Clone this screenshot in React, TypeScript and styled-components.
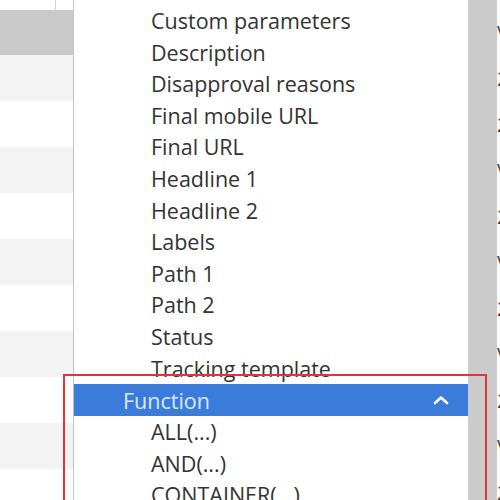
import React from "react";
import styled, { createGlobalStyle } from "styled-components";

const GlobalStyle = createGlobalStyle`
  html, body {
    margin: 0;
    padding: 0;
    background: #ffffff;
    overflow: hidden;
  }
  body {
    font-family: "Open Sans", "Noto Sans", sans-serif;
  }
`;

const fields = [
  "Custom parameters",
  "Description",
  "Disapproval reasons",
  "Final mobile URL",
  "Final URL",
  "Headline 1",
  "Headline 2",
  "Labels",
  "Path 1",
  "Path 2",
  "Status",
  "Tracking template",
];

const functions = ["ALL(...)", "AND(...)", "CONTAINER(...)"];

const ScPage = styled.div`
  position: relative;
  width: 500px;
  height: 500px;
  display: flex;
  overflow: hidden;
  background: #ffffff;
`;

const ScGrid = styled.div`
  width: 73px;
  flex: none;
  border-right: 1px solid #c4c4c4;
  display: flex;
  flex-direction: column;
`;

const ScGridTop = styled.div`
  height: 10px;
  flex: none;
  width: 55px;
  border-right: 1px solid #d0d0d0;
`;

const ScGridHeader = styled.div`
  height: 45px;
  flex: none;
  background: #c9c9c9;
`;

const ScGridRow = styled.div<{ $alt: boolean }>`
  height: 46px;
  flex: none;
  background: ${(p) => (p.$alt ? "#f3f3f3" : "#ffffff")};
`;

const ScMenu = styled.div`
  width: 394px;
  flex: none;
  display: flex;
  flex-direction: column;
  padding-top: 5px;
  color: #333333;
  font-size: 21.5px;
`;

const ScItem = styled.div`
  height: 31.6px;
  flex: none;
  line-height: 31.6px;
  padding-left: 77px;
  white-space: nowrap;
`;

const ScGroupHeader = styled.div`
  height: 32px;
  flex: none;
  background: #3b7cdb;
  color: #dde9fb;
  display: flex;
  align-items: center;
  justify-content: space-between;
  padding: 0 18px 0 49px;
`;

const ScStrip = styled.div`
  width: 29px;
  flex: none;
  background: #cbcbcb;
`;

const ScRightGrid = styled.div`
  flex: 1;
  display: flex;
  flex-direction: column;
  padding-top: 10px;
  font-size: 20px;
  color: #444444;
  white-space: nowrap;
`;

const ScRightCell = styled.div`
  height: 46px;
  flex: none;
  line-height: 46px;
`;

const ScHighlight = styled.div`
  position: absolute;
  left: 63px;
  top: 374px;
  width: 420px;
  height: 140px;
  border: 2px solid #e03535;
  pointer-events: none;
`;

const Chevron = () => (
  <svg width="18" height="12" viewBox="0 0 18 12">
    <path
      d="M3 9 L9 3.5 L15 9"
      fill="none"
      stroke="#ffffff"
      strokeWidth="2.6"
      strokeLinecap="round"
      strokeLinejoin="round"
    />
  </svg>
);

export default function App() {
  return (
    <ScPage>
      <GlobalStyle />
      <ScGrid>
        <ScGridTop />
        <ScGridHeader />
        {Array.from({ length: 10 }).map((_, i) => (
          <ScGridRow key={i} $alt={i % 2 === 0} />
        ))}
      </ScGrid>
      <ScMenu>
        {fields.map((f) => (
          <ScItem key={f}>{f}</ScItem>
        ))}
        <ScGroupHeader>
          <span>Function</span>
          <Chevron />
        </ScGroupHeader>
        {functions.map((f) => (
          <ScItem key={f}>{f}</ScItem>
        ))}
      </ScMenu>
      <ScStrip />
      <ScRightGrid>
        {["V", "2", "2", "V", "2", "V", "2", "V", "2", "V", "2"].map((t, i) => (
          <ScRightCell key={i}>{t}</ScRightCell>
        ))}
      </ScRightGrid>
      <ScHighlight />
    </ScPage>
  );
}
